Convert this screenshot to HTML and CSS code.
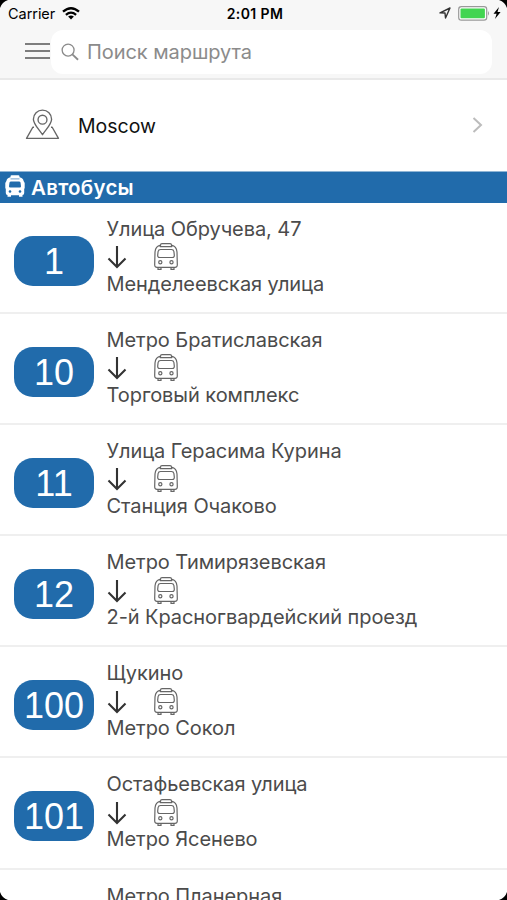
FILE: index.html
```html
<!DOCTYPE html>
<html lang="ru">
<head>
<meta charset="utf-8">
<meta name="viewport" content="width=device-width">
<title>Автобусы</title>
<link rel="stylesheet" href="styles.css">
</head>
<body>
<svg class="sprite" aria-hidden="true">
  <symbol id="bus" viewBox="0 0 24 27">
    <path d="M6.500 2.200C3 3 1.300 5 1 9L.7 21.500Q.6 24.300 3 24.300H21Q23.400 24.300 23.300 21.500L23 9C22.700 5 21 3 17.500 2.200M6.500 3.600V2Q6.500.6 8 .6H16Q17.500.6 17.500 2V3.600ZM6.500 6.500H17.500Q19.500 6.500 19.900 8.500L20.300 12Q20.500 14.500 18.300 14.500H5.700Q3.500 14.500 3.700 12L4.100 8.500Q4.500 6.500 6.500 6.500ZM4 24.300V26.300H7V24.300M17 24.300V26.300H20V24.300"/>
    <circle cx="6.300" cy="19.300" r="1.600"/><circle cx="17.500" cy="19.300" r="1.600"/>
  </symbol>
  <symbol id="down" viewBox="0 0 20 24"><path d="M10 1V22M1.500 13.500L10 22L18.500 13.500"/></symbol>
</svg>
<div class="screen">
  <header class="top">
    <div class="status">
      <div class="carrier"><span>Carrier</span>
        <svg class="wifi" viewBox="0 0 18 13"><path d="M1 4.700Q9-2.300 17 4.700M3.900 7.800Q9 3.500 14.100 7.800" fill="none" stroke="#000" stroke-width="2.300"/><path d="M6.100 9.600Q9 7.300 11.900 9.600L9 12.600Z"/></svg>
      </div>
      <div class="time">2:01 PM</div>
      <div class="power">
        <svg class="locate" viewBox="0 0 12 12"><path d="M1 5.900L11 1L6.500 11L6 6Z" fill="none" stroke="#333" stroke-width="1.400" stroke-linejoin="round"/></svg>
        <svg class="battery" viewBox="0 0 32 15"><rect x=".7" y=".7" width="28" height="13.400" rx="2.700" fill="#fff" stroke="#999" stroke-width="1.200"/><rect x="2.500" y="2.500" width="24.400" height="9.800" rx="1" fill="#42d551"/><path d="M30 5Q32 7.400 30 9.800Z" fill="#999"/></svg>
        <svg class="bolt" viewBox="0 0 8 12"><path d="M6 0L.5 6.800H3.600L2 12L7.600 5H4.500Z"/></svg>
      </div>
    </div>
    <div class="nav">
      <svg class="menu" viewBox="0 0 25 16"><path d="M0 1H25M0 8H25M0 15H25"/></svg>
      <div class="search">
        <svg class="glass" viewBox="0 0 19 19"><circle cx="7.500" cy="7.500" r="6.300"/><path d="M12 12L18 17.700" stroke-width="1.900"/></svg>
        <span>Поиск маршрута</span>
      </div>
    </div>
  </header>
  <section class="city">
    <svg class="pin" viewBox="0 0 36 32"><path d="M18 26.500C14 20.500 8.600 15.500 8.600 10.500A9.400 9.400 0 0 1 27.400 10.500C27.400 15.500 22 20.500 18 26.500ZM9.200 18.800H8L1.500 30.300H34.500L28 18.800H26.800"/><circle cx="18" cy="11" r="4.600"/></svg>
    <span>Moscow</span>
    <svg class="chevron" viewBox="0 0 11 16"><path d="M1.500 1L9 8L1.500 15"/></svg>
  </section>
  <h1 class="heading"><svg class="bus-solid" viewBox="0 0 20 22"><path fill="#fff" fill-rule="evenodd" d="M5.500 2.200V1.500Q5.500.3 6.700.3H13.300Q14.500.3 14.500 1.500V2.200Q18 2.800 18.600 6L19.700 8V13L19.200 14V18Q19.200 19.800 17.500 20V21.700H14V20.200H6V21.700H2.500V20Q.8 19.800.8 18V14L.3 13V8L1.400 6Q2 2.800 5.500 2.200ZM6 6.400Q4.800 6.400 4.500 7.600L4 11.200Q3.900 12.400 5.200 12.400H14.800Q16.100 12.400 16 11.200L15.500 7.600Q15.200 6.400 14 6.400Z"/><path d="M5.500 3.900H14.500" stroke="#6f9fcb"/><circle cx="5" cy="16.500" r="1.300" fill="#216bab"/><circle cx="15" cy="16.500" r="1.300" fill="#216bab"/></svg><span>Автобусы</span></h1>
  <main class="routes">
    <article class="route"><div class="number">1</div><div class="stops"><div class="from">Улица Обручева, 47</div><div class="marks"><svg class="down"><use href="#down"/></svg><svg class="bus"><use href="#bus"/></svg></div><div class="to">Менделеевская улица</div></div></article>
    <article class="route"><div class="number">10</div><div class="stops"><div class="from">Метро Братиславская</div><div class="marks"><svg class="down"><use href="#down"/></svg><svg class="bus"><use href="#bus"/></svg></div><div class="to">Торговый комплекс</div></div></article>
    <article class="route"><div class="number">11</div><div class="stops"><div class="from">Улица Герасима Курина</div><div class="marks"><svg class="down"><use href="#down"/></svg><svg class="bus"><use href="#bus"/></svg></div><div class="to">Станция Очаково</div></div></article>
    <article class="route"><div class="number">12</div><div class="stops"><div class="from">Метро Тимирязевская</div><div class="marks"><svg class="down"><use href="#down"/></svg><svg class="bus"><use href="#bus"/></svg></div><div class="to">2-й Красногвардейский проезд</div></div></article>
    <article class="route"><div class="number">100</div><div class="stops"><div class="from">Щукино</div><div class="marks"><svg class="down"><use href="#down"/></svg><svg class="bus"><use href="#bus"/></svg></div><div class="to">Метро Сокол</div></div></article>
    <article class="route"><div class="number">101</div><div class="stops"><div class="from">Остафьевская улица</div><div class="marks"><svg class="down"><use href="#down"/></svg><svg class="bus"><use href="#bus"/></svg></div><div class="to">Метро Ясенево</div></div></article>
    <article class="route"><div class="stops last"><div class="from">Метро Планерная</div></div></article>
  </main>
  <svg class="corner tl" viewBox="0 0 8 8"><path d="M0 0H8Q2 2 0 8Z"/></svg>
  <svg class="corner tr" viewBox="0 0 8 8"><path d="M0 0H8Q2 2 0 8Z"/></svg>
  <svg class="corner br" viewBox="0 0 8 8"><path d="M0 0H8Q2 2 0 8Z"/></svg>
  <svg class="corner bl" viewBox="0 0 8 8"><path d="M0 0H8Q2 2 0 8Z"/></svg>
</div>
</body>
</html>
```
FILE: styles.css
```css
* { box-sizing: border-box; }
html, body { margin: 0; height: 100%; overflow: hidden; }
body { font-family: Inter, "Liberation Sans", sans-serif; background: #fff; }
svg { display: block; flex: none; }
.sprite { display: none; }
.screen { position: relative; width: 507px; height: 900px; overflow: hidden; display: flex; flex-direction: column; }
.top { height: 80px; flex: none; background: #f7f7f7; border-bottom: 2px solid #e9e9e9; }
.status { height: 28px; padding: 0 6px 0 8px; display: grid; grid-template-columns: 1fr auto 1fr; align-items: center; font-size: 14.5px; line-height: 28px; }
.carrier { display: flex; align-items: center; gap: 7px; letter-spacing: -.05px; }
.wifi { width: 18px; height: 13px; margin-top: -2px; }
.time { font-weight: 600; font-size: 14px; letter-spacing: .4px; padding-left: 1px; }
.power { display: flex; align-items: center; justify-content: flex-end; margin-top: -2px; }
.locate { width: 12px; height: 12px; margin-right: 7px; }
.battery { width: 32px; height: 15px; }
.bolt { width: 8px; height: 12px; margin-left: 3px; }
.nav { display: flex; align-items: center; padding: 2px 15px 0 25px; }
.menu { width: 25px; height: 16px; margin-right: 1px; margin-top: -2px; fill: none; stroke: #555; stroke-width: 1.7; }
.search { flex: 1; height: 44px; border-radius: 12px; background: #fff; display: flex; align-items: center; gap: 8px; padding: 0 0 1px 10px; font-size: 20px; letter-spacing: -.06px; color: #8b8b8b; }
.glass { width: 18px; height: 18px; fill: none; stroke: #8b8b8b; stroke-width: 1.4; }
.city { height: 91px; flex: none; display: flex; align-items: center; padding: 0 24px 0 25px; font-size: 19.5px; color: #111; }
.pin { width: 35px; height: 31px; fill: none; stroke: #666; stroke-width: 1.4; stroke-linejoin: round; margin: -2px 18px 0 0; }
.chevron { width: 11px; height: 16px; margin: -2px 0 0 auto; fill: none; stroke: #bcbcbc; stroke-width: 2; }
.heading { margin: 0; height: 31.5px; flex: none; background: #216bab; color: #fff; display: flex; align-items: center; padding: 0 5px; gap: 6px; font-size: 20.5px; letter-spacing: .25px; font-weight: 600; border-top: 1px solid #90b5d5; }
.bus-solid { width: 20px; height: 22px; margin-top: -2px; }
.routes { flex: none; }
.route { height: 111.2px; display: flex; border-bottom: 2px solid #efefef; padding-left: 14px; }
.number { width: 80px; height: 50px; margin-top: 33px; border-radius: 19px; background: #216bab; color: #fff; font: 36px/51px "Liberation Sans", sans-serif; text-align: center; }
.stops { margin-left: 12.5px; padding-top: 14px; font-size: 20px; letter-spacing: -.07px; line-height: 25px; color: #4b4b4b; white-space: nowrap; }
.stops.last { margin-left: 92.5px; }
.marks { display: flex; align-items: center; height: 30px; }
.down { width: 20px; height: 24px; fill: none; stroke: #333; stroke-width: 2.1; margin-top: 1px; }
.bus { width: 24px; height: 27px; margin-left: 27px; fill: none; stroke: #666; stroke-width: 1.2; }
.corner { position: absolute; width: 8px; height: 8px; }
.tl { left: 0; top: 0; }
.tr { right: 0; top: 0; transform: rotate(90deg); }
.br { right: 0; bottom: 0; transform: rotate(180deg); }
.bl { left: 0; bottom: 0; transform: rotate(270deg); }
```
